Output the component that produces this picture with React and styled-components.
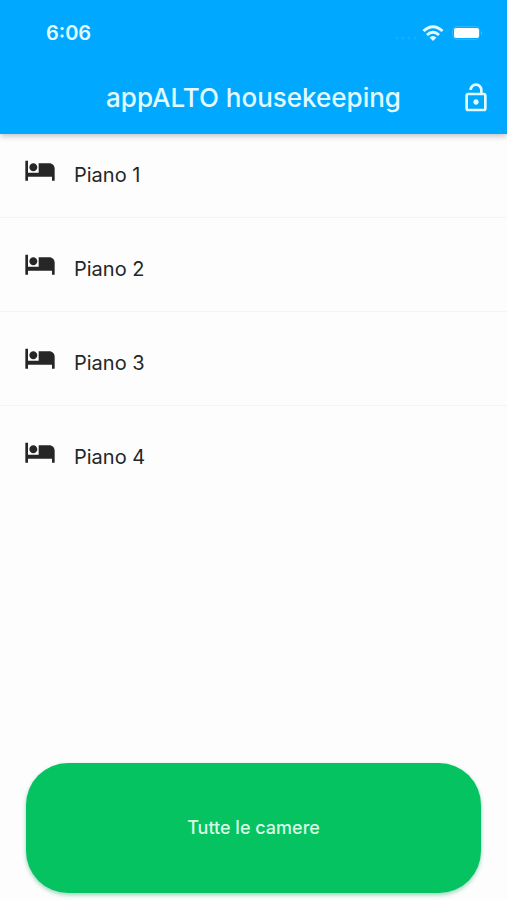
import React from "react";
import styled, { createGlobalStyle } from "styled-components";
import { MdHotel, MdOutlineLockOpen } from "react-icons/md";

const GlobalStyle = createGlobalStyle`
  * {
    box-sizing: border-box;
  }

  body {
    margin: 0;
    background-color: #fdfdfd;
    color: #262626;
    font-family: Inter, "Liberation Sans", sans-serif;
  }
`;

// Styled components
const Page = styled.div`
  display: flex;
  flex-direction: column;
  min-height: 100vh;
`;

const Header = styled.header`
  background-color: #00a8ff;
  color: #e2fbff;
  box-shadow: 0 2px 6px rgba(0, 0, 0, 0.25);
`;

const StatusBar = styled.div`
  display: flex;
  justify-content: space-between;
  align-items: center;
  height: 64px;
  padding: 2px 24px 0 46px;
`;

const Time = styled.span`
  font-size: 20px;
  font-weight: 600;
  line-height: 24px;
`;

const StatusIcons = styled.div`
  display: flex;
  align-items: center;
`;

const TitleBar = styled.div`
  display: grid;
  grid-template-columns: 32px 1fr 32px;
  align-items: center;
  height: 70px;
  padding: 0 15px 2px;
`;

const Title = styled.h1`
  grid-column: 2;
  margin: 0;
  font-size: 26px;
  font-weight: 500;
  line-height: 32px;
  text-align: center;
  white-space: nowrap;
`;

const LockButton = styled.button`
  display: flex;
  padding: 0;
  border: none;
  background: none;
  color: inherit;
  font-size: 32px;
  cursor: pointer;
`;

const FloorList = styled.ul`
  flex: 1;
  margin: 0;
  padding: 0;
  list-style: none;
`;

const FloorItem = styled.li`
  border-bottom: 1px solid #f4f4f4;

  &:last-child {
    border-bottom: none;
  }
`;

const FloorLink = styled.a`
  display: flex;
  align-items: flex-end;
  gap: 18px;
  padding: ${(props) => (props.$first ? "20px" : "30px")} 24px 31px;
  color: inherit;
  text-decoration: none;

  svg {
    font-size: 32px;
  }
`;

const FloorName = styled.span`
  font-size: 20px;
  line-height: 22px;
`;

const Footer = styled.footer`
  padding: 0 26px 7px;
`;

const AllRoomsButton = styled.button`
  display: block;
  width: 100%;
  padding: 53px 24px;
  border: none;
  border-radius: 42px;
  background-color: #06c361;
  color: #d9fbe6;
  box-shadow: 0 2px 4px rgba(0, 150, 90, 0.4);
  font-family: inherit;
  font-size: 18px;
  font-weight: 500;
  line-height: 24px;
  cursor: pointer;
`;

const floors = ["Piano 1", "Piano 2", "Piano 3", "Piano 4"];

const SignalIcons = () => (
  <svg width="90" height="20" viewBox="0 0 90 20" aria-hidden="true">
    <g fill="#12afff">
      <circle cx="4" cy="15" r="1.5" />
      <circle cx="10" cy="15" r="1.5" />
      <circle cx="16" cy="15" r="1.5" />
      <circle cx="22" cy="15" r="1.5" />
    </g>
    <g fill="none" stroke="#e6fbff" strokeWidth="3">
      <path d="M30.5 8 Q40 -0.5 49.5 8" />
      <path d="M34 12 Q40 6.5 46 12" />
    </g>
    <path d="M36.5 14.5 Q40 11.5 43.5 14.5 L40 18 Z" fill="#e6fbff" />
    <rect x="59.5" y="3.5" width="27" height="13" rx="4" fill="none" stroke="#2cb8ff" />
    <rect x="61" y="5" width="25" height="10" rx="2" fill="#fff" />
    <path d="M88 8 Q90 10 88 12 Z" fill="#4cc6ff" />
  </svg>
);

// React component
const App = () => {
  return (
    <Page>
      <GlobalStyle />
      <Header>
        <StatusBar>
          <Time>6:06</Time>
          <StatusIcons>
            <SignalIcons />
          </StatusIcons>
        </StatusBar>
        <TitleBar>
          <Title>appALTO housekeeping</Title>
          <LockButton type="button" aria-label="Esci">
            <MdOutlineLockOpen />
          </LockButton>
        </TitleBar>
      </Header>
      <FloorList>
        {floors.map((floor, index) => (
          <FloorItem key={floor}>
            <FloorLink href={`#piano-${index + 1}`} $first={index === 0}>
              <MdHotel />
              <FloorName>{floor}</FloorName>
            </FloorLink>
          </FloorItem>
        ))}
      </FloorList>
      <Footer>
        <AllRoomsButton type="button">Tutte le camere</AllRoomsButton>
      </Footer>
    </Page>
  );
};

export default App;
